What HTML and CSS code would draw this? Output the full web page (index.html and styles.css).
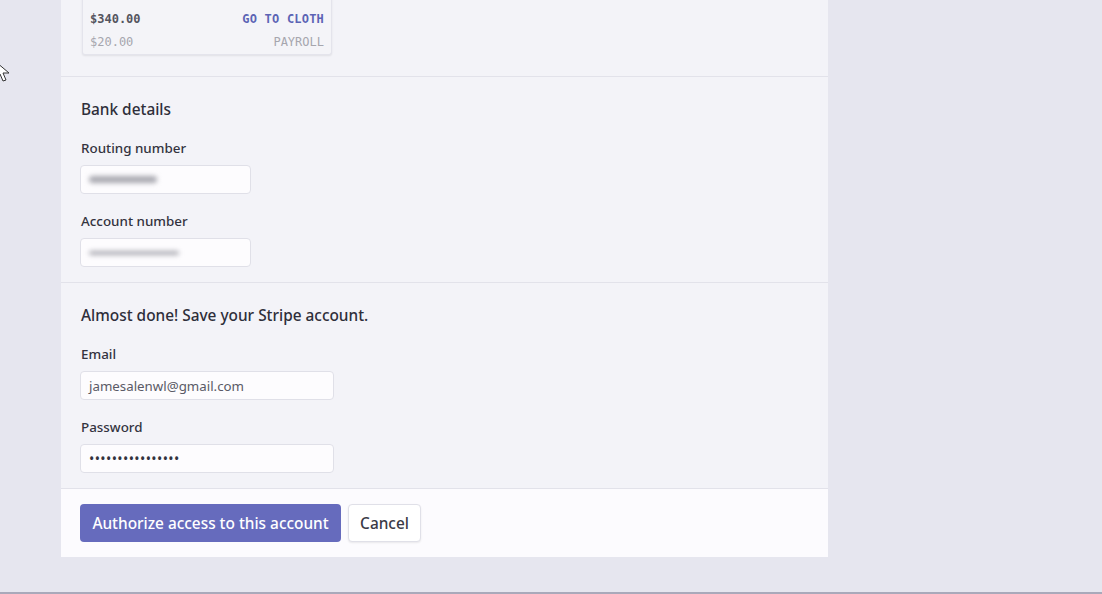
FILE: index.html
```html
<!DOCTYPE html>
<html lang="en">
<head>
  <meta charset="UTF-8" />
  <meta name="viewport" content="width=device-width, initial-scale=1.0"/>
  <title>Connect bank account</title>
  <link rel="stylesheet" href="styles.css">
</head>
<body>
  <svg class="cursor" width="14" height="22" viewBox="0 0 14 22">
    <path d="M-4 1 L-4 17 L0 13 L3 20 L6 19 L3 12 L9 12 Z" fill="#fff" stroke="#333" stroke-width="1"/>
  </svg>

  <div class="card">
    <div class="section section-top">
      <div class="receipt">
        <div class="receipt-row">
          <span class="amount">$340.00</span>
          <span class="desc desc-link">GO TO CLOTH</span>
        </div>
        <div class="receipt-row muted">
          <span>$20.00</span>
          <span>PAYROLL</span>
        </div>
      </div>
    </div>

    <div class="section">
      <h2>Bank details</h2>
      <label class="field">
        <span class="label">Routing number</span>
        <span class="input input-short"><span class="blur blur-routing"></span></span>
      </label>
      <label class="field">
        <span class="label">Account number</span>
        <span class="input input-short"><span class="blur blur-account"></span></span>
      </label>
    </div>

    <div class="section">
      <h2>Almost done! Save your Stripe account.</h2>
      <label class="field">
        <span class="label">Email</span>
        <span class="input input-long">jamesalenwl@gmail.com</span>
      </label>
      <label class="field">
        <span class="label">Password</span>
        <span class="input input-long dots">&bull;&bull;&bull;&bull;&bull;&bull;&bull;&bull;&bull;&bull;&bull;&bull;&bull;&bull;&bull;&bull;</span>
      </label>
    </div>

    <div class="footer">
      <button class="btn btn-primary">Authorize access to this account</button>
      <button class="btn btn-cancel">Cancel</button>
    </div>
  </div>
</body>
</html>
```

FILE: styles.css
```css
* {
  box-sizing: border-box;
}
body {
  margin: 0;
  height: 100vh;
  overflow: hidden;
  background: #e6e6ef;
  font-family: "Noto Sans", "Open Sans", sans-serif;
  color: #2e2e3c;
  border-bottom: 2px solid #a9a9ba;
}
.cursor {
  position: absolute;
  left: 0;
  top: 61px;
}
.card {
  width: 767px;
  margin: -19px 0 0 61px;
  background: #f3f3f8;
}
.section {
  padding: 23px 20px 15px;
  border-bottom: 1px solid #e2e2ea;
}
.section-top {
  padding: 0 20px 21px 21px;
}
.receipt {
  width: 250px;
  padding: 27px 7px 0;
  background: #f4f4f8;
  border: 1px solid #e4e4ec;
  border-top: none;
  border-radius: 0 0 3px 3px;
  box-shadow: 0 1px 2px rgba(0,0,0,0.08);
  font-family: "DejaVu Sans Mono", monospace;
  font-size: 12px;
}
.receipt-row {
  display: flex;
  justify-content: space-between;
  line-height: 23px;
}
.amount {
  font-weight: bold;
  color: #55555f;
}
.desc-link {
  font-weight: bold;
  color: #5c64b5;
  letter-spacing: 0.2px;
}
.muted {
  color: #a6a6ae;
}
h2 {
  margin: 0;
  font-size: 15.4px;
  font-weight: 500;
  line-height: 20px;
  color: #2e2e3a;
}
.field {
  display: block;
  margin-top: 18px;
}
.field + .field {
  margin-top: 17px;
}
.label {
  display: block;
  font-size: 13.4px;
  line-height: 20px;
  font-weight: 500;
  color: #33333f;
  margin-bottom: 7px;
}
.input {
  display: flex;
  align-items: center;
  height: 29px;
  margin-left: -1px;
  padding: 0 8px;
  background: #fdfcfe;
  border: 1px solid #e0e0e8;
  border-radius: 4px;
  font-size: 13.3px;
  color: #5a5a66;
}
.input-short {
  width: 171px;
}
.input-long {
  width: 254px;
}
.dots {
  color: #33333d;
  font-size: 14px;
  letter-spacing: 0.4px;
}
.blur {
  display: block;
  height: 7px;
  background: #a8a8b0;
  border-radius: 4px;
  filter: blur(2.5px);
}
.blur-routing {
  width: 68px;
}
.blur-account {
  width: 90px;
  height: 4px;
}
.footer {
  display: flex;
  gap: 7px;
  padding: 15px 19px;
  background: #fcfbfe;
}
.btn {
  height: 38px;
  border-radius: 4px;
  font-family: "Noto Sans", "Open Sans", sans-serif;
  font-size: 15.4px;
  font-weight: 500;
  cursor: pointer;
}
.btn-primary {
  width: 261px;
  background: #666bbd;
  color: #fff;
  border: none;
}
.btn-cancel {
  width: 73px;
  background: #fff;
  color: #3a3a46;
  border: 1px solid #e0e0e8;
  box-shadow: 0 1px 2px rgba(0,0,0,0.08);
}
```
